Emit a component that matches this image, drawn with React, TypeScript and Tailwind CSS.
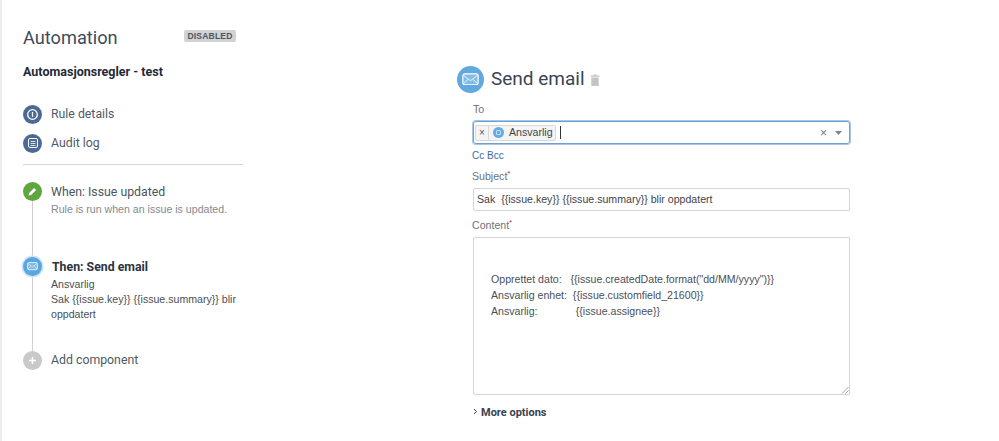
import React from "react";

const seg = "font-['Roboto','Open_Sans',sans-serif]";
const arial = "font-['Liberation_Sans',Arial,sans-serif]";

function Mail({ size }: { size: number }) {
  return (
    <svg width={size} height={size * 0.75} viewBox="0 0 20 15" fill="none" stroke="#fff" strokeWidth="1.4">
      <rect x="1" y="1" width="18" height="13" rx="2.5" fill="#a9d3f0" fillOpacity="0.45" />
      <path d="M2 3l8 6 8-6M2 12.5l5-5M18 12.5l-5-5" strokeWidth="1" />
    </svg>
  );
}

function NavIcon({ children }: { children: React.ReactNode }) {
  return (
    <span className="w-[19px] h-[19px] rounded-full bg-[#4c6a94] flex items-center justify-center shrink-0">
      {children}
    </span>
  );
}

export default function App() {
  return (
    <div className={`w-[999px] h-[441px] bg-white overflow-hidden flex ${arial}`}>
      <div className="w-[2px] h-full bg-[#ececec] shrink-0" />
      <aside className="w-[220px] shrink-0 ml-[21px] pt-[26px]">
        <div className="flex items-start h-[24px]">
          <h1 className={`${seg} text-[18.2px] leading-[24px] text-[#3d4a5c] w-[161px]`}>Automation</h1>
          <span className="mt-[4px] h-[12px] w-[52px] rounded-[2px] bg-[#d2d2d2] text-[8.5px] leading-[12px] font-bold text-[#4a5568] text-center tracking-[0.2px]">
            DISABLED
          </span>
        </div>
        <div className={`${seg} mt-[13px] text-[12.5px] leading-[18px] font-bold text-[#1f2937]`}>Automasjonsregler - test</div>

        <div className="mt-[23px] flex items-center h-[20px]">
          <NavIcon>
            <svg width="13" height="13" viewBox="0 0 13 13" fill="none" stroke="#fff" strokeWidth="1.3">
              <circle cx="6.5" cy="6.5" r="4.8" />
              <path d="M6.5 4v4.8" />
            </svg>
          </NavIcon>
          <span className={`${seg} ml-[9px] text-[12.3px] text-[#505a66]`}>Rule details</span>
        </div>
        <div className="mt-[9px] flex items-center h-[20px]">
          <NavIcon>
            <svg width="12" height="12" viewBox="0 0 12 12" fill="none" stroke="#fff" strokeWidth="1">
              <rect x="1.5" y="1.5" width="9" height="9" rx="1.5" />
              <path d="M3.5 4.5h5M3.5 6.5h5M3.5 8.5h5" stroke="#d5deea" />
            </svg>
          </NavIcon>
          <span className={`${seg} ml-[9px] text-[12.3px] text-[#505a66]`}>Audit log</span>
        </div>
        <div className="mt-[11px] h-px bg-[#d4d4d4]" />

        <div className="relative mt-[17px]">
          <div className="absolute left-[9px] top-[10px] w-px h-[160px] bg-[#cfcfcf]" />
          <div className="relative flex h-[75px]">
            <span className="w-[19px] h-[19px] rounded-full bg-[#5fa63f] flex items-center justify-center shrink-0">
              <svg width="11" height="11" viewBox="0 0 11 11" fill="#fff">
                <path d="M1.5 9.5l.6-2.6 5-5 2 2-5 5z" />
              </svg>
            </span>
            <div className="ml-[9px] pt-px">
              <div className={`${seg} text-[12.3px] leading-[19px] text-[#4a5561]`}>When: Issue updated</div>
              <div className="text-[10.6px] leading-[14px] text-[#85898f] whitespace-nowrap">Rule is run when an issue is updated.</div>
            </div>
          </div>
          <div className="relative flex h-[94px]">
            <span className="w-[19px] h-[19px] rounded-full bg-[#5aa7e0] flex items-center justify-center shrink-0 shadow-[0_0_0_1.5px_#cfe5f7]">
              <Mail size={11} />
            </span>
            <div className="ml-[9px] pt-px">
              <div className={`${seg} text-[12.3px] leading-[19px] font-bold text-[#2c333d] ml-px`}>Then: Send email</div>
              <div className="text-[10.6px] leading-[15px] text-[#4b4f55] w-[192px]">
                <div>Ansvarlig</div>
                <div>{"Sak {{issue.key}} {{issue.summary}} blir oppdatert"}</div>
              </div>
            </div>
          </div>
          <div className="relative flex items-center h-[19px]">
            <span className="w-[19px] h-[19px] rounded-full bg-[#c9c9c9] flex items-center justify-center shrink-0">
              <svg width="9" height="9" viewBox="0 0 9 9" stroke="#fff" strokeWidth="1.6">
                <path d="M4.5 1v7M1 4.5h7" />
              </svg>
            </span>
            <span className={`${seg} ml-[9px] text-[12.3px] text-[#4f5964]`}>Add component</span>
          </div>
        </div>
      </aside>

      <main className="ml-[214px] w-[393px] shrink-0 pt-[65px]">
        <div className="flex items-center h-[28px]">
          <span className="w-[27px] h-[27px] rounded-full bg-[#61a9df] flex items-center justify-center shrink-0">
            <Mail size={17} />
          </span>
          <span className={`${seg} ml-[7px] text-[19px] leading-[28px] text-[#3a4452]`}>Send email</span>
          <svg className="ml-[5px] mt-[2px]" width="10" height="12" viewBox="0 0 10 12" fill="#c4c4c4">
            <path d="M0.5 1.5H3.5V.6h3v.9h3v1.2h-9zM1.3 3.4h7.4V12H1.3z" />
          </svg>
        </div>
        <div className="ml-[16px] w-[377px]">
          <label className="block mt-[9px] text-[10.6px] leading-[14px] text-[#6a7280]">To</label>
          <div className="mt-[5px] h-[23px] border border-[#6f9fd3] rounded-[3px] shadow-[0_0_0_1px_#a9c6e6] flex items-center pl-[1px] pr-[7px]">
            <span className="flex items-center h-[16px] border border-[#d9d9d9] rounded-[2px] bg-[#f4f4f4]">
              <span className="w-[13px] h-full border-r border-[#d9d9d9] flex items-center justify-center text-[10px] text-[#555]">×</span>
              <span className="w-[11px] h-[11px] ml-[4px] rounded-full bg-[#66ace2] flex items-center justify-center">
                <span className="w-[5px] h-[5px] rounded-[1px] border border-[#c5e0f5]" />
              </span>
              <span className="ml-[5px] mr-[2px] text-[10.6px] text-[#3f454d]">Ansvarlig</span>
            </span>
            <span className="ml-[4px] w-px h-[13px] bg-[#333]" />
            <span className="ml-auto text-[12px] leading-none text-[#777]">×</span>
            <svg className="ml-[8px]" width="7" height="4" viewBox="0 0 7 4" fill="#7a8592">
              <path d="M0 0h7L3.5 4z" />
            </svg>
          </div>
          <div className="mt-[5px] -ml-px text-[10px] leading-[13px] text-[#3f68a0]">Cc Bcc</div>
          <label className="block mt-[7px] -ml-px text-[10.6px] leading-[14px] text-[#6a7280]">
            Subject<sup className="text-[#b5372a] text-[8px]">*</sup>
          </label>
          <div className="mt-[5px] h-[23px] border border-[#d5d5d5] rounded-[2px] flex items-center pl-[3px] text-[10.6px] text-[#3f444b] whitespace-pre">
            {"Sak  {{issue.key}} {{issue.summary}} blir oppdatert"}
          </div>
          <label className="block mt-[7px] -ml-px text-[10.6px] leading-[14px] text-[#6a7280]">
            Content<sup className="text-[#b5372a] text-[8px]">*</sup>
          </label>
          <div className="relative mt-[5px] h-[158px] border border-[#d5d5d5] rounded-[2px] pt-[33px] pl-[17px] text-[10.6px] leading-[16px] text-[#4b5058] whitespace-pre">
            {'Opprettet dato:   {{issue.createdDate.format("dd/MM/yyyy")}}\nAnsvarlig enhet:  {{issue.customfield_21600}}\nAnsvarlig:             {{issue.assignee}}'}
            <svg className="absolute right-0 bottom-0" width="8" height="8" viewBox="0 0 8 8" stroke="#888" strokeWidth="0.8">
              <path d="M7.5 1L1 7.5M7.5 4.5L4.5 7.5" />
            </svg>
          </div>
          <div className="mt-[10px] flex items-center h-[16px]">
            <svg className="-mt-[3px]" width="5" height="7" viewBox="0 0 5 7" fill="none" stroke="#444" strokeWidth="1">
              <path d="M1 1l2.5 2.5L1 6" />
            </svg>
            <span className={`${seg} ml-[3px] text-[11px] font-bold text-[#3a4250]`}>More options</span>
          </div>
        </div>
      </main>
    </div>
  );
}
